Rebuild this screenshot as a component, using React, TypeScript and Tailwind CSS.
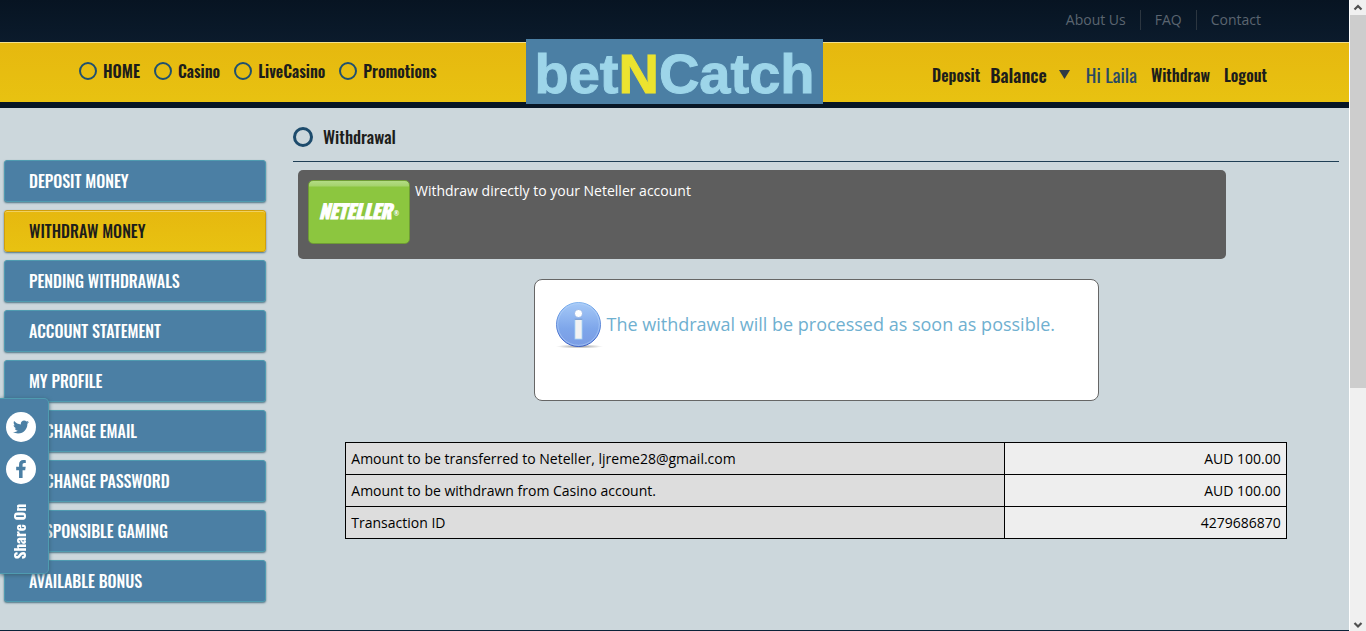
import React from 'react';
import { FaFacebookF, FaTwitter } from 'react-icons/fa';

const topLinks = ['About Us', 'FAQ', 'Contact'];

const mainLinks = ['HOME', 'Casino', 'LiveCasino', 'Promotions'];

const menuItems = [
  { label: 'Deposit Money' },
  { label: 'Withdraw Money', active: true },
  { label: 'Pending Withdrawals' },
  { label: 'Account Statement' },
  { label: 'My Profile' },
  { label: 'Change Email', nested: true },
  { label: 'Change Password', nested: true },
  { label: 'Responsible Gaming' },
  { label: 'Available Bonus' },
];

const rows = [
  { label: 'Amount to be transferred to Neteller, ljreme28@gmail.com', value: 'AUD 100.00' },
  { label: 'Amount to be withdrawn from Casino account.', value: 'AUD 100.00' },
  { label: 'Transaction ID', value: '4279686870' },
];

function Header() {
  return (
    <header>
      {/* Top links */}
      <div className="flex h-[42px] justify-end bg-linear-to-b from-[#071422] to-[#0b1b2c] pt-2.5 pr-[74px]">
        <nav className="flex h-5 divide-x divide-[#2c3640] text-sm leading-5 text-[#5b6570]">
          {topLinks.map((link) => (
            <a key={link} href="#" className="px-3.5">
              {link}
            </a>
          ))}
        </nav>
      </div>

      {/* Main bar */}
      <div className="relative flex h-[66px] justify-between border-t border-b-6 border-t-[#f4e08c] border-b-[#071626] bg-linear-to-b from-[#e6b80f] to-[#e8c211] pr-[82px] pl-[79px] font-['Oswald',sans-serif] text-base font-semibold text-[#1d1d1b]">
        <nav className="flex items-center gap-3.5 pb-1">
          {mainLinks.map((link) => (
            <a key={link} href="#" className="flex items-center gap-1.5">
              <span className="size-[18px] rounded-full border-2 border-[#1f5070]" />
              {link}
            </a>
          ))}
        </nav>

        <a
          href="#"
          className="absolute inset-x-0 -top-1 mx-auto flex h-[65px] w-[297px] items-center justify-center bg-[#4b7fa4] pt-1 font-['Liberation_Sans',sans-serif] text-[56px] leading-none font-bold text-[#9dd5e9] [-webkit-text-stroke:1px_currentColor]"
        >
          bet<span className="text-[#ece32f]">N</span>Catch
        </a>

        <nav className="flex items-center pt-1">
          <a href="#">Deposit</a>
          <button type="button" className="ml-2.5 flex items-center gap-3 text-lg">
            Balance
            <svg viewBox="0 0 11 9" className="h-[9px] w-[11px]">
              <path d="M0 0h11L5.500 9z" fill="#2f3b44" />
            </svg>
          </button>
          <span className="ml-4 text-[19px] font-normal text-[#2a4a63]">Hi Laila</span>
          <a href="#" className="ml-3.5">
            Withdraw
          </a>
          <a href="#" className="ml-3.5">
            Logout
          </a>
        </nav>
      </div>
    </header>
  );
}

function Sidebar() {
  return (
    <nav className="mt-[52px] ml-1 flex w-[262px] shrink-0 flex-col gap-2 font-['Oswald',sans-serif] text-base leading-10 font-medium uppercase">
      {menuItems.map((item) => (
        <a
          key={item.label}
          href="#"
          className={
            item.active
              ? 'h-[42px] rounded-[3px] border border-[#d09f0c] bg-linear-to-b from-[#e6b80f] to-[#e8c211] pl-6 text-[#1d1d1b] shadow-[0_1px_2px_#4d7484,inset_0_1px_0_#f0d060]'
              : 'h-[42px] rounded-[3px] border border-[#4f9bb0] bg-[#4b7fa4] pl-6 text-white shadow-[0_1px_2px_#4d7484]'
          }
        >
          <span className={item.nested ? 'pl-4' : ''}>{item.label}</span>
        </a>
      ))}
    </nav>
  );
}

function InfoIcon() {
  return (
    <svg viewBox="0 0 47 47" className="size-[47px] shrink-0">
      <defs>
        <linearGradient id="info-disc" x1="0" y1="0" x2="0" y2="1">
          <stop offset="0" stopColor="#a5c9f7" />
          <stop offset="0.6" stopColor="#7ea6ea" />
          <stop offset="1" stopColor="#7a9ce4" />
        </linearGradient>
        <linearGradient id="info-rim" x1="0" y1="0" x2="0" y2="1">
          <stop offset="0" stopColor="#7fb2ee" />
          <stop offset="1" stopColor="#3c5fc4" />
        </linearGradient>
        <radialGradient id="info-shadow">
          <stop offset="0" stopColor="#999" />
          <stop offset="1" stopColor="#999" stopOpacity="0" />
        </radialGradient>
      </defs>
      <ellipse cx="23.500" cy="44.500" rx="23.500" ry="2" fill="url(#info-shadow)" />
      <circle cx="22.500" cy="22.500" r="22" fill="url(#info-disc)" stroke="url(#info-rim)" />
      <circle cx="22.500" cy="22.500" r="20.800" fill="none" stroke="#b5d4fa" strokeOpacity="0.6" />
      <circle cx="22.500" cy="11.500" r="4" fill="#fff" stroke="#7ba0dc" strokeWidth="0.600" />
      <rect x="19" y="17.500" width="7" height="19.500" fill="#f2f2f2" stroke="#a9d4f5" strokeWidth="0.800" />
      <path d="M18.600 17.300h7.800" stroke="#6b8cc4" strokeWidth="0.800" />
    </svg>
  );
}

function Content() {
  return (
    <main className="mr-2.5 ml-[27px] min-w-0 flex-1 pt-[15px]">
      <h1 className="flex h-[39px] items-start gap-2.5 border-b border-[#1f3e55] pt-[3px] font-['Oswald',sans-serif] text-[17px] leading-[22px] font-medium text-[#1d1d1b]">
        <span className="mt-px size-5 rounded-full border-3 border-[#1d4b6c]" />
        Withdrawal
      </h1>

      {/* Payment method */}
      <section className="mt-2 ml-[5px] flex h-[89px] max-w-[928px] gap-[5px] rounded-[5px] bg-[#5e5e5e] p-2.5 text-sm text-white">
        <div className="flex h-16 w-[102px] items-center justify-center rounded-[5px] border border-[#6f9c35] bg-[linear-gradient(#b3dc84,#a5d36d_5px,#8cc63f_6px)] pb-1 font-['Oswald',sans-serif] text-[19px] leading-none font-bold text-white italic">
          <span className="[-webkit-text-stroke:1px_currentColor]">NETELLER</span>
          <span className="mt-2 ml-0.5 text-[6px] not-italic">®</span>
        </div>
        <p className="leading-[22px]">Withdraw directly to your Neteller account</p>
      </section>

      {/* Message */}
      <section className="mx-auto mt-5 flex h-[122px] max-w-[565px] gap-1 rounded-lg border border-[#666] bg-white pt-[22px] pl-[21px] text-lg leading-[44px] text-[#6fb0d0]">
        <InfoIcon />
        <p>The withdrawal will be processed as soon as possible.</p>
      </section>

      <table className="mx-auto mt-[41px] w-[90%] table-fixed border-collapse text-sm text-black">
        <tbody>
          {rows.map((row) => (
            <tr key={row.label} className="h-8">
              <th scope="row" className="w-[70%] border border-black bg-[#dddddd] px-[5px] text-left font-normal">
                {row.label}
              </th>
              <td className="border border-black bg-[#eeeeee] px-[5px] text-right">{row.value}</td>
            </tr>
          ))}
        </tbody>
      </table>
    </main>
  );
}

function ShareTab() {
  return (
    <aside className="fixed top-[398px] left-0 flex h-44 w-[49px] flex-col items-start gap-3 rounded-r-[5px] border border-l-0 border-[#4f9bb0] bg-[#4b7fa4] pt-[13px] pl-1.5 shadow-[0_1px_4px_#3b6173]">
      <a href="#" aria-label="Twitter" className="flex size-[30px] items-center justify-center rounded-full bg-white text-[#4b7fa4]">
        <FaTwitter className="size-4" />
      </a>
      <a href="#" aria-label="Facebook" className="flex size-[30px] items-center justify-center rounded-full bg-white text-[#4b7fa4]">
        <FaFacebookF className="size-[18px]" />
      </a>
      <span className="mt-2 rotate-180 font-['Oswald',sans-serif] text-[15px] leading-[26px] font-bold text-white [writing-mode:vertical-rl]">
        Share On
      </span>
    </aside>
  );
}

function Scrollbar() {
  return (
    <div aria-hidden="true" className="flex w-[17px] shrink-0 flex-col items-center border-l border-white bg-[#f0f0f0]">
      <svg viewBox="0 0 16 15" className="h-[15px] w-4 shrink-0">
        <path d="M4.500 9.500L8 6l3.500 3.500" fill="none" stroke="#505050" strokeWidth="2.200" />
      </svg>
      <div className="w-full flex-[373] bg-[#cdcdcd]" />
      <div className="flex-[228]" />
      <svg viewBox="0 0 16 15" className="h-[15px] w-4 shrink-0">
        <path d="M4.500 7L8 10.500 11.500 7" fill="none" stroke="#505050" strokeWidth="2.200" />
      </svg>
    </div>
  );
}

export default function App() {
  return (
    <div className="flex h-screen bg-[#ccd7dc] font-['Open_Sans','Noto_Sans',sans-serif]">
      <div className="flex min-w-0 flex-1 flex-col overflow-hidden">
        <Header />
        <div className="flex flex-1">
          <Sidebar />
          <Content />
        </div>
        <footer className="h-px bg-[#0b2238]" />
      </div>
      <Scrollbar />
      <ShareTab />
    </div>
  );
}
